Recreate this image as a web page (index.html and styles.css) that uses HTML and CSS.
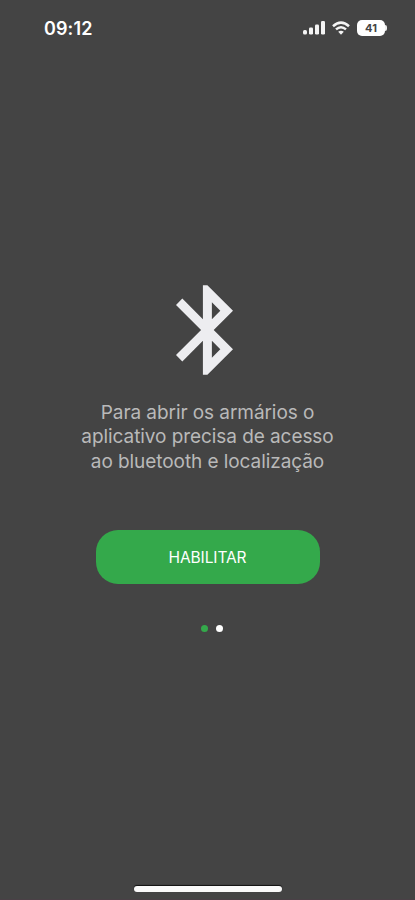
FILE: index.html
```html
<!DOCTYPE html>
<html lang="pt-BR">
<head>
<meta charset="utf-8">
<title>Habilitar bluetooth</title>
<link rel="stylesheet" href="styles.css">
</head>
<body>
<div class="screen">
  <header class="status">
    <time class="clock">09:12</time>
    <div class="indicators">
      <svg class="signal" width="22" height="14" viewBox="0 0 22 14"><rect x="0" y="9" width="4" height="4.5" rx="1.5"/><rect x="6" y="6.5" width="4" height="7" rx="1.3"/><rect x="12" y="3.5" width="4" height="10" rx="1.3"/><rect x="18" y="0" width="4" height="13.5" rx="1.3"/></svg>
      <svg class="wifi" width="18" height="14" viewBox="0 0 18 14"><path d="M1 5.2Q9-2 17 5.2M4 8.4Q9 4 14 8.4"/><path class="wifi-core" d="M6.2 10.8Q9 8.7 11.8 10.8L9 13.7Z"/></svg>
      <div class="battery"><span class="level">41</span><i class="cap"></i></div>
    </div>
  </header>
  <main class="content">
    <svg class="bluetooth" width="57" height="90" viewBox="5 2 12.71 20"><path d="M17.71 7.71 12 2h-1v7.59L6.41 5 5 6.41 10.59 12 5 17.59 6.41 19 11 14.41V22h1l5.71-5.71-4.3-4.29zM13 5.83l1.88 1.88L13 9.59zm1.88 10.46L13 18.17v-3.76z"/></svg>
    <p class="message">Para abrir os armários o<br>aplicativo precisa de acesso<br>ao bluetooth e localização</p>
    <button class="enable">HABILITAR</button>
    <div class="dots"><i class="dot active"></i><i class="dot"></i></div>
  </main>
  <footer class="home"><div class="home-bar"></div></footer>
</div>
</body>
</html>
```
FILE: styles.css
```css
* { box-sizing: border-box; }
body { margin: 0; background: #444; font-family: Inter, "Liberation Sans", sans-serif; }
.screen { height: 900px; display: flex; flex-direction: column; border-bottom: 1px solid #4a4046; }
.status { display: flex; justify-content: space-between; align-items: center; height: 56px; padding: 0 28px 0 44px; color: #fff; }
.clock { font-size: 18px; font-weight: 600; letter-spacing: 0.1px; }
.indicators { display: flex; align-items: center; gap: 7px; }
.signal, .wifi { fill: #f4f4f4; display: block; }
.wifi path { fill: none; stroke: #f4f4f4; stroke-width: 2.5; }
.wifi .wifi-core { fill: #f4f4f4; stroke: none; }
.battery { display: flex; align-items: center; gap: 0; }
.level { width: 28px; height: 16px; border-radius: 5px; background: #fff; color: #444; font-size: 11px; font-weight: 700; line-height: 16px; text-align: center; }
.cap { width: 2px; height: 6px; border-radius: 0 2px 2px 0; background: #eee; }
.content { flex: 1; display: flex; flex-direction: column; align-items: center; padding-top: 229px; }
.bluetooth { fill: #ededf0; display: block; margin-right: 6px; }
.message { margin: 26px 0 0; font-size: 19px; line-height: 24.3px; letter-spacing: -0.07px; text-align: center; color: #b9b9b9; white-space: nowrap; }
.enable { width: 224px; height: 54px; margin-top: 56.5px; padding: 0; border: 0; border-radius: 22px; background: #34a94b; color: #fff; font: 400 15.5px Inter, "Liberation Sans", sans-serif; letter-spacing: -0.1px; }
.dots { display: flex; gap: 8px; margin: 40.5px 0 0 9px; }
.dot { width: 7px; height: 7px; border-radius: 50%; background: #fff; }
.active { background: #34a94b; }
.home { display: flex; justify-content: center; padding-bottom: 7px; }
.home-bar { width: 148px; height: 6px; border-radius: 3px; background: #fafafa; box-shadow: 0 -1px 1px #111; }
```
